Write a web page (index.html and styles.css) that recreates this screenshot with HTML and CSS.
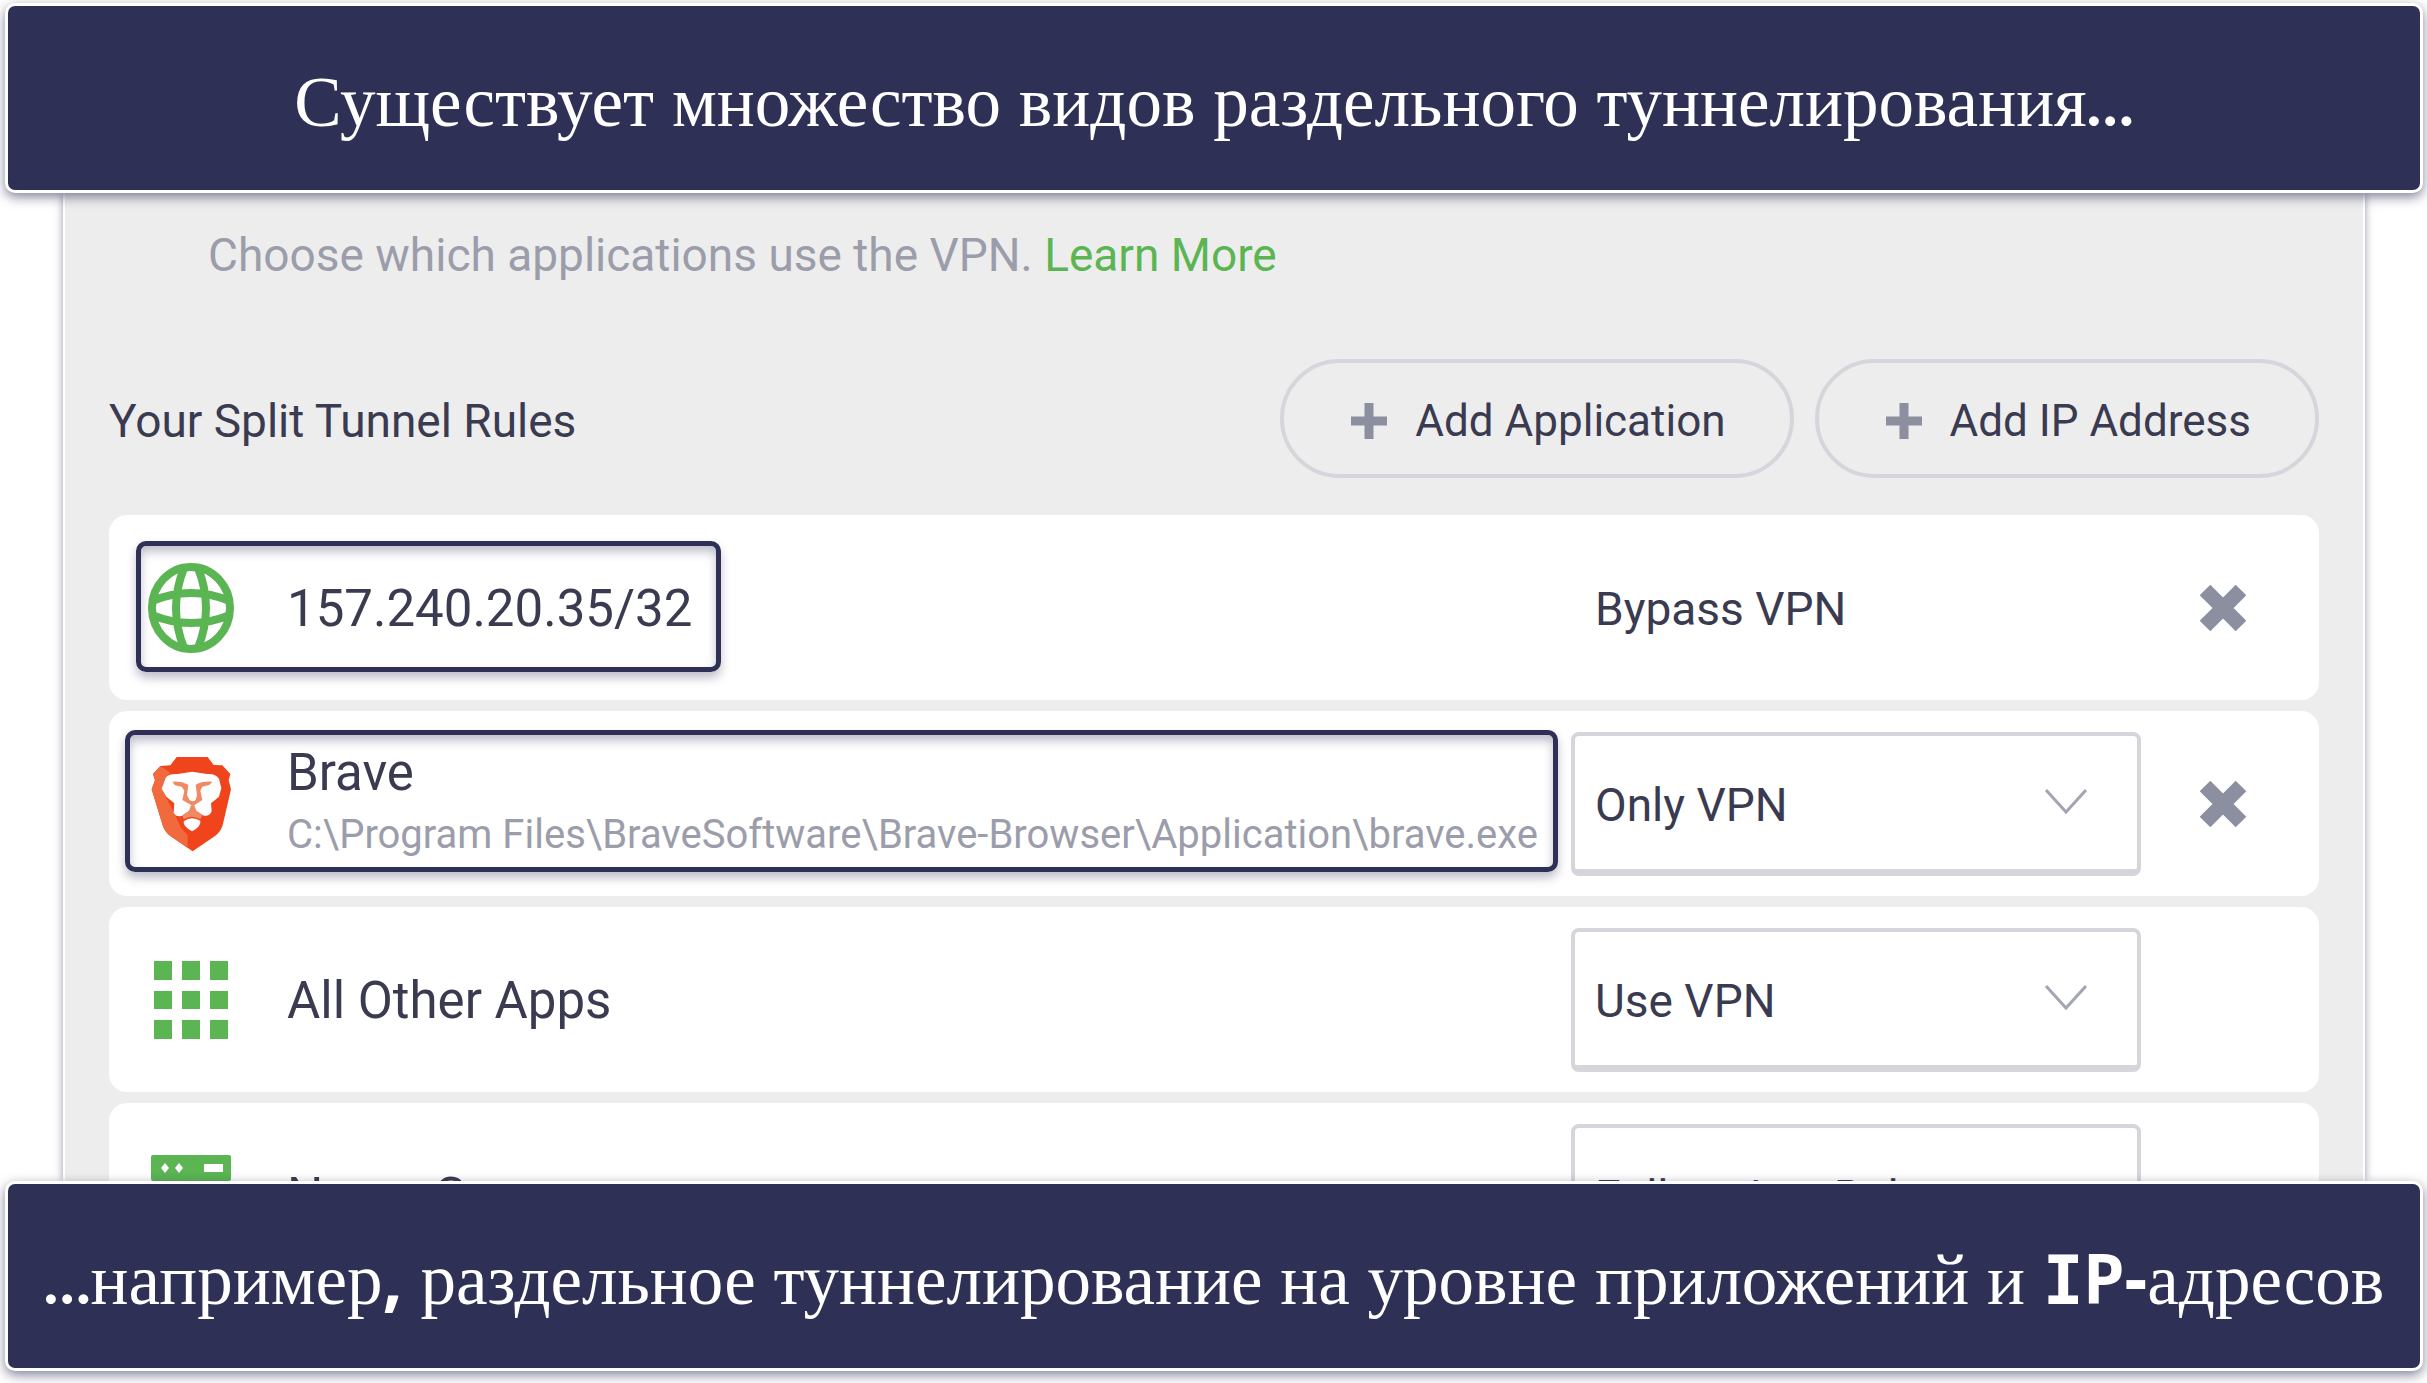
FILE: index.html
```
<!DOCTYPE html>
<html lang="ru">
<head>
    <meta charset="UTF-8">
    <title>Раздельное туннелирование</title>
    <link rel="stylesheet" href="styles.css">
</head>
<body>
    <header class="banner">
        <h1>Существует множество видов раздельного туннелирования<span class="dots">…</span></h1>
    </header>

    <main class="panel" lang="en">
        <p class="intro">Choose which applications use the VPN. <a href="#">Learn More</a></p>

        <div class="toolbar">
            <h2>Your Split Tunnel Rules</h2>
            <button class="btn">
                <svg width="36" height="36" viewBox="0 0 36 36"><path d="M18 0V36M0 18H36" stroke="#8c8f9f" stroke-width="9"/></svg>
                Add Application
            </button>
            <button class="btn">
                <svg width="36" height="36" viewBox="0 0 36 36"><path d="M18 0V36M0 18H36" stroke="#8c8f9f" stroke-width="9"/></svg>
                Add IP Address
            </button>
        </div>

        <div class="rules">
            <div class="rule">
                <div class="rule-icon">
                    <svg width="88" height="90" viewBox="0 0 88 90" fill="none" stroke="#5ab552" stroke-width="8">
                        <ellipse cx="44" cy="45" rx="39" ry="41"/>
                        <path d="M37 5Q21 45 37 85M51 5Q67 45 51 85M5 38Q44 22 83 38M5 52Q44 68 83 52"/>
                    </svg>
                </div>
                <div class="rule-name">157.240.20.35/32</div>
                <div class="rule-mode">Bypass VPN</div>
                <button class="remove" aria-label="Remove 157.240.20.35/32">
                    <svg width="50" height="50" viewBox="0 0 50 50"><path d="M7 7L43 43M43 7L7 43" stroke="#8c8f9f" stroke-width="15"/></svg>
                </button>
                <div class="highlight highlight-ip"></div>
            </div>

            <div class="rule">
                <div class="rule-icon">
                    <svg width="80" height="96" viewBox="60 72 240 288">
                        <path fill="#f0441c" d="M137 75H230L248 99L274 100L298 126L293 145L300 172L275 280Q269 300 252 312L185 358L118 312Q101 300 95 280L62 172L72 145L66 126L88 102L118 100Z"/>
                        <path fill="#f16a3d" d="M88 102L66 126L72 145L62 172L95 280Q101 300 118 312L170 348V310L150 288L128 240L92 172L104 134L118 122Z"/>
                        <path fill="#fff" d="M104 137Q112 124 140 126L184 119L228 126Q254 124 264 140L271 168L264 194L240 214L242 238Q234 256 216 250L188 232L182 232L158 250Q136 258 128 242L130 214L106 194L92 170Z"/>
                        <path fill="#f08a64" d="M124 149Q150 146 172 158L168 190L176 204Q186 212 194 204L198 190L194 158Q216 146 244 149L236 158L214 164L208 176L214 204L186 222L154 204L160 176L152 164L132 160Z"/>
                        <path fill="#fff" d="M175 150H191L190 196Q184 202 178 196Z"/>
                        <path fill="#f08a64" d="M180 220H190L196 236L214 250L208 262Q182 246 158 262L154 250L174 236Z"/>
                        <path fill="#fff" d="M158 268Q182 250 208 266Q212 282 183 298Q156 284 158 268Z"/>
                    </svg>
                </div>
                <div class="rule-name">Brave
                    <small>C:\Program Files\BraveSoftware\Brave-Browser\Application\brave.exe</small>
                </div>
                <div class="select-box">
                    <select aria-label="Brave">
                        <option>Only VPN</option>
                        <option>Bypass VPN</option>
                    </select>
                    <svg class="chevron" width="44" height="28" viewBox="0 0 44 28"><path d="M2 2L22 24L42 2" fill="none" stroke="#a3a5b2" stroke-width="3"/></svg>
                </div>
                <button class="remove" aria-label="Remove Brave">
                    <svg width="50" height="50" viewBox="0 0 50 50"><path d="M7 7L43 43M43 7L7 43" stroke="#8c8f9f" stroke-width="15"/></svg>
                </button>
                <div class="highlight highlight-app"></div>
            </div>

            <div class="rule">
                <div class="rule-icon">
                    <svg width="74" height="78" viewBox="0 0 74 78" fill="#5ab552">
                        <path d="M0 0h18v19h-18zM28 0h18v19h-18zM56 0h18v19h-18z"/>
                        <path d="M0 30h18v18h-18zM28 30h18v18h-18zM56 30h18v18h-18z"/>
                        <path d="M0 59h18v19h-18zM28 59h18v19h-18zM56 59h18v19h-18z"/>
                    </svg>
                </div>
                <div class="rule-name">All Other Apps</div>
                <div class="select-box">
                    <select aria-label="All Other Apps">
                        <option>Use VPN</option>
                        <option>Bypass VPN</option>
                    </select>
                    <svg class="chevron" width="44" height="28" viewBox="0 0 44 28"><path d="M2 2L22 24L42 2" fill="none" stroke="#a3a5b2" stroke-width="3"/></svg>
                </div>
            </div>

            <div class="rule">
                <div class="rule-icon">
                    <svg width="80" height="82" viewBox="0 0 80 82">
                        <rect width="80" height="26" rx="2" fill="#5ab552"/>
                        <rect y="29" width="80" height="26" rx="2" fill="#5ab552"/>
                        <path d="M14 8l4 5l-4 5l-4-5zM28 8l4 5l-4 5l-4-5zM53 9h19v8h-19z" fill="#fff"/>
                    </svg>
                </div>
                <div class="rule-name">Name Servers</div>
                <div class="select-box">
                    <select aria-label="Name Servers">
                        <option>Follow App Rules</option>
                        <option>Use VPN</option>
                    </select>
                    <svg class="chevron" width="44" height="28" viewBox="0 0 44 28"><path d="M2 2L22 24L42 2" fill="none" stroke="#a3a5b2" stroke-width="3"/></svg>
                </div>
            </div>
        </div>
    </main>

    <footer class="banner">
        <p><span class="dots">…</span>например<span class="sign">,</span> раздельное туннелирование на уровне приложений и <span class="latin">IP</span><span class="sign">-</span>адресов</p>
    </footer>
</body>
</html>
```

FILE: styles.css
```
:root {
    --navy: #2f3056;
    --green: #5ab552;
    --text: #3a3a50;
    --muted: #9b9dab;
    --border: #d5d5dc;
}

* {
    box-sizing: border-box;
}

body {
    margin: 0;
    height: 100vh;
    padding: 3px 4px 12px 5px;
    display: flex;
    flex-direction: column;
    background: white;
    font-family: Roboto, sans-serif;
    color: var(--text);
    overflow: hidden;
}

h1, h2, p {
    margin: 0;
    font-weight: normal;
}

.banner {
    position: relative;
    z-index: 1;
    flex: none;
    height: 190px;
    padding-top: 7px;
    display: flex;
    align-items: center;
    justify-content: center;
    background: var(--navy);
    border: 3px solid white;
    border-radius: 10px;
    box-shadow: 0 4px 12px rgba(47, 48, 86, 0.6);
    color: white;
    font-family: "Liberation Serif", serif;
}

.banner h1,
.banner p {
    font-size: 71px;
    line-height: 80px;
    white-space: nowrap;
}

.banner span {
    line-height: 1;
}

.dots {
    font-family: Lato, sans-serif;
    font-size: 60px;
    font-weight: 900;
}

.latin {
    font-family: "DejaVu Sans Mono", monospace;
    font-size: 68px;
    font-weight: bold;
}

.sign {
    font-family: "Noto Sans", sans-serif;
    font-weight: 700;
}

.panel {
    flex: 1;
    min-height: 0;
    margin: 0 58px;
    padding: 32px 44px 0;
    background: #ededed;
    border: solid white;
    border-width: 0 2px;
    box-shadow: 0 0 8px rgba(47, 48, 86, 0.5);
    overflow: hidden;
}

.intro {
    padding-left: 99px;
    font-size: 46px;
    line-height: 60px;
    color: var(--muted);
}

.intro a {
    color: var(--green);
    text-decoration: none;
}

.toolbar {
    display: flex;
    align-items: center;
    gap: 21px;
    margin: 74px 0 37px;
}

.toolbar h2 {
    flex: 1;
    padding-top: 4px;
    font-size: 46px;
}

.btn {
    display: flex;
    align-items: center;
    gap: 28px;
    height: 119px;
    padding: 4px 64px 0 67px;
    background: transparent;
    border: 4px solid var(--border);
    border-radius: 60px;
    font: 44px Roboto, sans-serif;
    color: var(--text);
    cursor: pointer;
}

.rules {
    display: grid;
    gap: 11px;
}

.rule {
    position: relative;
    display: grid;
    grid-template-columns: 166px 1fr 570px 178px;
    align-items: center;
    height: 185px;
    padding-left: 12px;
    background: white;
    border-radius: 18px;
}

.rule-icon,
.remove {
    display: flex;
    align-items: center;
    justify-content: center;
}

.rule-icon {
    padding-right: 26px;
}

.rule-name {
    padding-top: 2px;
    font-size: 51px;
    line-height: 60px;
    white-space: nowrap;
}

.rule-name small {
    display: block;
    font-size: 40px;
    line-height: 64px;
    color: var(--muted);
}

.rule-mode {
    padding: 2px 0 0 24px;
    font-size: 46px;
}

.select-box {
    position: relative;
}

.select-box select {
    appearance: none;
    display: block;
    width: 100%;
    height: 144px;
    padding: 5px 20px 0;
    background: white;
    border: 4px solid var(--border);
    border-bottom-width: 7px;
    border-radius: 8px;
    font: 46px Roboto, sans-serif;
    color: var(--text);
}

.chevron {
    position: absolute;
    top: 56px;
    right: 53px;
    pointer-events: none;
}

.remove {
    padding: 0 14px 0 0;
    background: none;
    border: none;
    cursor: pointer;
}

.highlight {
    position: absolute;
    border: 5px solid var(--navy);
    border-radius: 10px;
    box-shadow: 0 6px 10px rgba(47, 48, 86, 0.3), inset 0 6px 10px rgba(47, 48, 86, 0.3);
    pointer-events: none;
}

.highlight-ip {
    top: 26px;
    left: 27px;
    width: 585px;
    height: 131px;
}

.highlight-app {
    top: 19px;
    left: 16px;
    right: 761px;
    height: 142px;
}
```
